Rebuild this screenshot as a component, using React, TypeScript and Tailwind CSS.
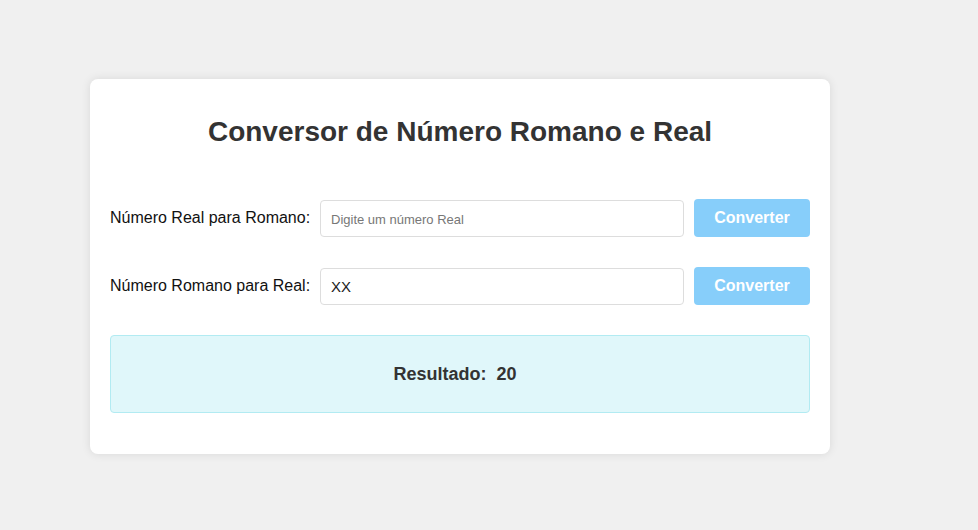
import { useState } from 'react';

const toRoman = (n: number) => {
  const map: [number, string][] = [
    [1000, 'M'], [900, 'CM'], [500, 'D'], [400, 'CD'], [100, 'C'], [90, 'XC'],
    [50, 'L'], [40, 'XL'], [10, 'X'], [9, 'IX'], [5, 'V'], [4, 'IV'], [1, 'I'],
  ];
  let out = '';
  for (const [v, s] of map) {
    while (n >= v) {
      out += s;
      n -= v;
    }
  }
  return out;
};

const fromRoman = (s: string) => {
  const vals: Record<string, number> = { I: 1, V: 5, X: 10, L: 50, C: 100, D: 500, M: 1000 };
  const up = s.toUpperCase();
  let total = 0;
  for (let i = 0; i < up.length; i++) {
    const cur = vals[up[i]] ?? 0;
    const next = vals[up[i + 1]] ?? 0;
    total += cur < next ? -cur : cur;
  }
  return total;
};

export default function App() {
  const [real, setReal] = useState('');
  const [roman, setRoman] = useState('XX');
  const [result, setResult] = useState<string>('20');

  return (
    <div className="min-h-screen w-full bg-[#f0f0f0] pt-[79px] pl-[90px] font-['Liberation_Sans',Arial,sans-serif]">
      <div className="w-[740px] rounded-lg bg-white px-5 pt-[37px] pb-[41px] shadow-[0_0_10px_rgba(0,0,0,0.1)]">
        <h1 className="text-center text-[28px] font-bold leading-[32px] text-[#333]">
          Conversor de Número Romano e Real
        </h1>

        {/* linha real -> romano */}
        <div className="mt-[51px] flex items-center gap-2.5">
          <label className="w-[200px] shrink-0 whitespace-nowrap text-base text-[#111]">Número Real para Romano:</label>
          <input
            value={real}
            onChange={(e) => setReal(e.target.value)}
            placeholder="Digite um número Real"
            className="h-[37px] min-w-0 flex-1 rounded border border-[#ddd] px-2.5 text-[15px] text-[#222] outline-none placeholder:text-[13px] placeholder:text-[#777]"
          />
          <button
            onClick={() => setResult(toRoman(parseInt(real, 10) || 0))}
            className="h-[38px] w-[116px] shrink-0 rounded bg-[#87cefa] text-base font-bold text-white"
          >
            Converter
          </button>
        </div>

        {/* linha romano -> real */}
        <div className="mt-[30px] flex items-center gap-2.5">
          <label className="w-[200px] shrink-0 whitespace-nowrap text-base text-[#111]">Número Romano para Real:</label>
          <input
            value={roman}
            onChange={(e) => setRoman(e.target.value)}
            className="h-[37px] min-w-0 flex-1 rounded border border-[#ddd] px-2.5 text-[15px] text-[#222] outline-none"
          />
          <button
            onClick={() => setResult(String(fromRoman(roman)))}
            className="h-[38px] w-[116px] shrink-0 rounded bg-[#87cefa] text-base font-bold text-white"
          >
            Converter
          </button>
        </div>

        <div className="mt-[30px] flex h-[78px] items-center justify-center rounded border border-[#b2ebf2] bg-[#e0f7fa] pr-[10px]">
          <p className="whitespace-pre text-lg font-bold text-[#333]">{`Resultado:  ${result}`}</p>
        </div>
      </div>
    </div>
  );
}
